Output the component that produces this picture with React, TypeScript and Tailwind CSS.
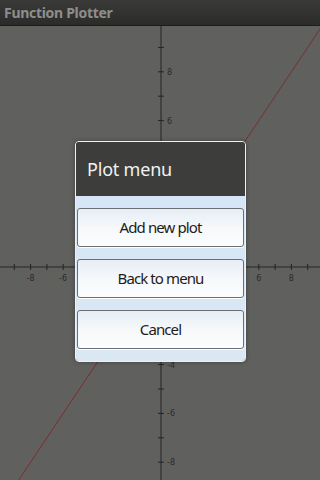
import React from "react";

// graph geometry (svg coordinates, svg starts under the title bar)
const OX = 161;
const OY = 241;
const SX = 16.3;
const SY = 24.4;

function Graph() {
  const ticks: number[] = [];
  for (let k = -10; k <= 10; k++) ticks.push(k);

  return (
    <svg width="320" height="454" className="block">
      <rect x="0" y="0" width="320" height="454" fill="#60615e" />
      {/* axes */}
      <line x1={OX} y1="0" x2={OX} y2="454" stroke="#242424" strokeWidth="1" />
      <line x1="0" y1={OY} x2="320" y2={OY} stroke="#242424" strokeWidth="1" />
      {ticks.map((k) =>
        k === 0 ? null : (
          <g key={"x" + k}>
            <line x1={OX + k * SX} y1={OY - 3} x2={OX + k * SX} y2={OY + 3} stroke="#242424" strokeWidth="1" />
            {k % 2 === 0 && Math.abs(k) <= 8 && (
              <text
                x={OX + k * SX}
                y={OY + 14}
                fontSize="8"
                fill="#2a2a2a"
                textAnchor="middle"
                fontFamily="'DejaVu Sans', sans-serif"
              >
                {k}
              </text>
            )}
          </g>
        )
      )}
      {ticks.map((k) =>
        k === 0 ? null : (
          <g key={"y" + k}>
            <line x1={OX - 3} y1={OY - k * SY} x2={OX + 3} y2={OY - k * SY} stroke="#242424" strokeWidth="1" />
            {k % 2 === 0 && Math.abs(k) <= 8 && (
              <text
                x={OX + 6}
                y={OY - k * SY + 3}
                fontSize="8"
                fill="#2a2a2a"
                fontFamily="'DejaVu Sans', sans-serif"
              >
                {k}
              </text>
            )}
          </g>
        )
      )}
      {/* y = x */}
      <line
        x1={OX - 12 * SX}
        y1={OY + 12 * SY}
        x2={OX + 12 * SX}
        y2={OY - 12 * SY}
        stroke="#7a2e2e"
        strokeWidth="1"
      />
    </svg>
  );
}

function MenuButton({ label }: { label: string }) {
  return (
    <button className="h-[39px] w-full rounded-[3px] border border-[#6b6e72] bg-gradient-to-b from-[#e6eef6] via-[#f6f8fa] to-[#fdfdfe] text-[15px] tracking-[-0.9px] text-[#1c1c1c] shadow-[0_1px_0_#ffffff]">
      {label}
    </button>
  );
}

export default function App() {
  return (
    <div
      className="relative h-[480px] w-[320px] overflow-hidden bg-[#60615e]"
      style={{ fontFamily: "'Noto Sans', 'Open Sans', sans-serif" }}
    >
      {/* title bar */}
      <div className="flex h-[26px] items-center border-b border-[#1c1c1b] bg-gradient-to-b from-[#3a3b39] to-[#2b2c2a] px-[4px]">
        <span className="text-[14px] font-bold leading-none tracking-[-0.3px] text-[#8d8e8c]">Function Plotter</span>
      </div>

      <Graph />

      {/* dialog */}
      <div className="absolute left-[75px] top-[141px] w-[171px] overflow-hidden rounded-[4px] border border-[#eef0f2] shadow-[0_0_4px_rgba(0,0,0,0.35)]">
        <div className="flex h-[54px] items-center bg-[#3d3e3b] px-[11px]">
          <span className="text-[18px] leading-none tracking-[-0.2px] text-[#f2f2f2]">Plot menu</span>
        </div>
        <div className="flex flex-col gap-[12px] bg-gradient-to-b from-[#d6e6f6] to-[#dbe8f4] px-[1px] pb-[12px] pt-[12px]">
          <MenuButton label="Add new plot" />
          <MenuButton label="Back to menu" />
          <MenuButton label="Cancel" />
        </div>
      </div>
    </div>
  );
}
